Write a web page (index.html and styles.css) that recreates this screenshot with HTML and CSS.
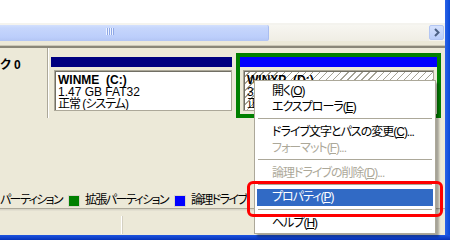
FILE: index.html
```html
<!DOCTYPE html>
<html lang="ja">
<head>
<meta charset="utf-8">
<title>ディスクの管理</title>
<link rel="stylesheet" href="styles.css">
</head>
<body>
<div class="app">
  <div class="body-row">
    <div class="main">
      <div class="list-pane"></div>
      <div class="hscroll">
        <div class="thumb"><span class="grip"></span></div>
        <div class="track"></div>
        <div class="arrow-btn">
          <svg width="8" height="9" viewBox="0 0 8 9"><path d="M2 1 L5.5 4.5 L2 8" fill="none" stroke="#4d6185" stroke-width="2"/></svg>
        </div>
      </div>
      <div class="splitter"></div>
      <div class="lower">
        <div class="lower-inner">
          <div class="disk-row">
            <div class="disk-label">ク 0</div>
            <div class="part primary">
              <div class="bar navy"></div>
              <div class="pbox">
                <div class="pname">WINME&nbsp;&nbsp;(C:)</div>
                <div>1.47 GB FAT32</div>
                <div class="jp">正常 (システム)</div>
              </div>
            </div>
            <div class="part extended">
              <div class="bar blue"></div>
              <div class="pbox hatch">
                <div class="pname">WINXP&nbsp;&nbsp;(D:)</div>
                <div class="clipped">39.53 GB NTFS</div>
                <div class="clipped jp">正常</div>
              </div>
            </div>
          </div>
          <div class="spacer"></div>
          <div class="legend">
            <span class="legend-label">パーティション</span>
            <span class="swatch green"></span>
            <span class="legend-label">拡張パーティション</span>
            <span class="swatch blue"></span>
            <span class="legend-label">論理ドライブ</span>
          </div>
          <div class="status">
            <div class="cell first"></div>
            <div class="cell"></div>
          </div>
        </div>
      </div>
    </div>
    <div class="frame-right"></div>
  </div>
  <div class="frame-bottom"></div>

  <div class="menu">
    <div class="item">開く(<u>O</u>)</div>
    <div class="item">エクスプローラ(<u>E</u>)</div>
    <div class="sep"></div>
    <div class="item">ドライブ文字とパスの変更(<u>C</u>)...</div>
    <div class="item disabled">フォーマット(<u>F</u>)...</div>
    <div class="sep"></div>
    <div class="item disabled">論理ドライブの削除(<u>D</u>)...</div>
    <div class="sep"></div>
    <div class="item active">プロパティ(<u>P</u>)</div>
    <div class="sep"></div>
    <div class="item">ヘルプ(<u>H</u>)</div>
  </div>
  <div class="callout"></div>
</div>
</body>
</html>
```

FILE: styles.css
```css
html, body {
  margin: 0;
  padding: 0;
}
body {
  width: 450px;
  height: 240px;
  overflow: hidden;
  background: #ece9d8;
  font-family: "Liberation Sans", "Noto Sans CJK JP", sans-serif;
  font-size: 12px;
  font-feature-settings: "palt" 1;
  color: #000;
}
.app {
  position: relative;
  width: 450px;
  height: 240px;
  display: flex;
  flex-direction: column;
}
.body-row {
  display: flex;
  height: 235px;
}
.main {
  width: 445px;
  display: flex;
  flex-direction: column;
}
.frame-right {
  width: 5px;
  background: linear-gradient(to right, #2a63e8, #0a4ad8);
}
.frame-bottom {
  height: 5px;
  background: linear-gradient(to bottom, #1d55e0, #0632b8);
}

/* upper list pane */
.list-pane {
  height: 23px;
  background: #fff;
}
.hscroll {
  height: 16px;
  padding-top: 2px;
  background: #f4f3ee;
  display: flex;
}
.thumb {
  width: 269px;
  height: 16px;
  box-sizing: border-box;
  background: linear-gradient(to bottom, #d3e0fd 0, #c6d6fc 3px, #bccefb 12px, #b2c5f4 16px);
  border-right: 1px solid #a9bdf0;
  border-radius: 0 2px 2px 0;
  position: relative;
}
.grip {
  position: absolute;
  left: 106px;
  top: 3px;
  width: 8px;
  height: 7px;
  background: repeating-linear-gradient(to right, #eef3ff 0 1px, #8fa8e6 1px 2px);
}
.track {
  flex: 1;
  height: 16px;
  background: linear-gradient(to bottom, #f7f6f1, #efede4);
}
.arrow-btn {
  width: 15px;
  height: 15px;
  margin-right: 1px;
  box-sizing: border-box;
  border: 1px solid #b3c6f3;
  border-radius: 2px;
  background: linear-gradient(to bottom, #d5e1fd, #bacdfa);
  display: flex;
  align-items: center;
  justify-content: center;
}
.splitter {
  height: 4px;
  background: #ece9d8;
}
.lower {
  flex: 1;
  border-top: 1px solid #cbc7b6;
  display: flex;
  flex-direction: column;
}
.lower-inner {
  flex: 1;
  border-top: 2px solid #8a8779;
  display: flex;
  flex-direction: column;
}

/* disk row */
.disk-row {
  height: 70px;
  display: flex;
  align-items: flex-start;
}
.disk-label {
  width: 48px;
  height: 70px;
  border-right: 1px solid #aca899;
  box-shadow: 1px 0 0 #fff;
  font-weight: bold;
  line-height: 14px;
  padding-top: 10px;
  box-sizing: border-box;
  white-space: nowrap;
  overflow: hidden;
}
.part {
  display: flex;
  flex-direction: column;
}
.primary {
  width: 181px;
  margin-left: 3px;
  padding-top: 9px;
}
.extended {
  width: 205px;
  height: 65px;
  box-sizing: border-box;
  margin-left: 4px;
  margin-top: 5px;
  border: 4px solid #008000;
}
.bar {
  height: 10px;
}
.navy { background: #000080; }
.blue { background: #0000ff; }
.pbox {
  margin-top: 3px;
  height: 41px;
  box-sizing: border-box;
  border: 1px solid #aca899;
  box-shadow: inset 1px 1px 0 #716f64;
  background: #fff;
  padding: 3px 0 0 3px;
  line-height: 12px;
  white-space: nowrap;
  overflow: hidden;
}
.jp {
  letter-spacing: -1px;
}
.primary .pbox {
  margin-left: 3px;
}
.extended .pbox {
  margin-left: 3px;
  margin-right: 3px;
}
.hatch {
  background: repeating-linear-gradient(135deg, #fff 0 4px, #a5a396 4px 5px);
}
.clipped {
  width: 7px;
  overflow: hidden;
}
.pname {
  font-weight: bold;
}

.spacer {
  flex: 1;
}

/* legend */
.legend {
  height: 15px;
  display: flex;
  align-items: center;
  white-space: nowrap;
  overflow: hidden;
}
.legend-label {
  line-height: 15px;
  letter-spacing: -1.6px;
}
.swatch {
  width: 12px;
  height: 12px;
  box-sizing: border-box;
  border: 1px solid #d8d5c8;
  margin: 0 5px 0 6px;
  flex: none;
}
.swatch.green { background: #008000; }
.swatch.blue { background: #0000ff; }

/* status bar */
.status {
  height: 27px;
  box-sizing: border-box;
  border-top: 1px solid #aca899;
  box-shadow: inset 0 1px 0 #d9d6c8, inset 0 2px 0 #e3e0d1;
  padding-top: 7px;
  display: flex;
}
.cell {
  height: 18px;
}
.cell.first {
  width: 121px;
  border-right: 1px solid #fff;
  box-shadow: 1px 0 0 #d4d0c2;
}

/* context menu */
.menu {
  position: absolute;
  left: 254px;
  top: 80px;
  width: 182px;
  box-sizing: border-box;
  border: 1px solid #aca899;
  background: #fff;
  padding: 2px;
  box-shadow: 3px 3px 2px rgba(0, 0, 0, 0.3);
}
.item {
  height: 16px;
  line-height: 16px;
  padding-left: 15px;
  white-space: nowrap;
  letter-spacing: -1px;
}
.item.disabled {
  color: #aca899;
}
.item.active {
  background: #316ac5;
  color: #fff;
  height: 17px;
  line-height: 17px;
  margin-top: -1px;
}
.sep {
  height: 9px;
  position: relative;
}
.sep::after {
  content: "";
  position: absolute;
  left: 1px;
  right: 1px;
  top: 3px;
  height: 1px;
  background: #aca899;
}

/* red annotation */
.callout {
  position: absolute;
  left: 247px;
  top: 181px;
  width: 196px;
  height: 36px;
  box-sizing: border-box;
  border: 3px solid #f00;
  border-radius: 6px;
}
```
